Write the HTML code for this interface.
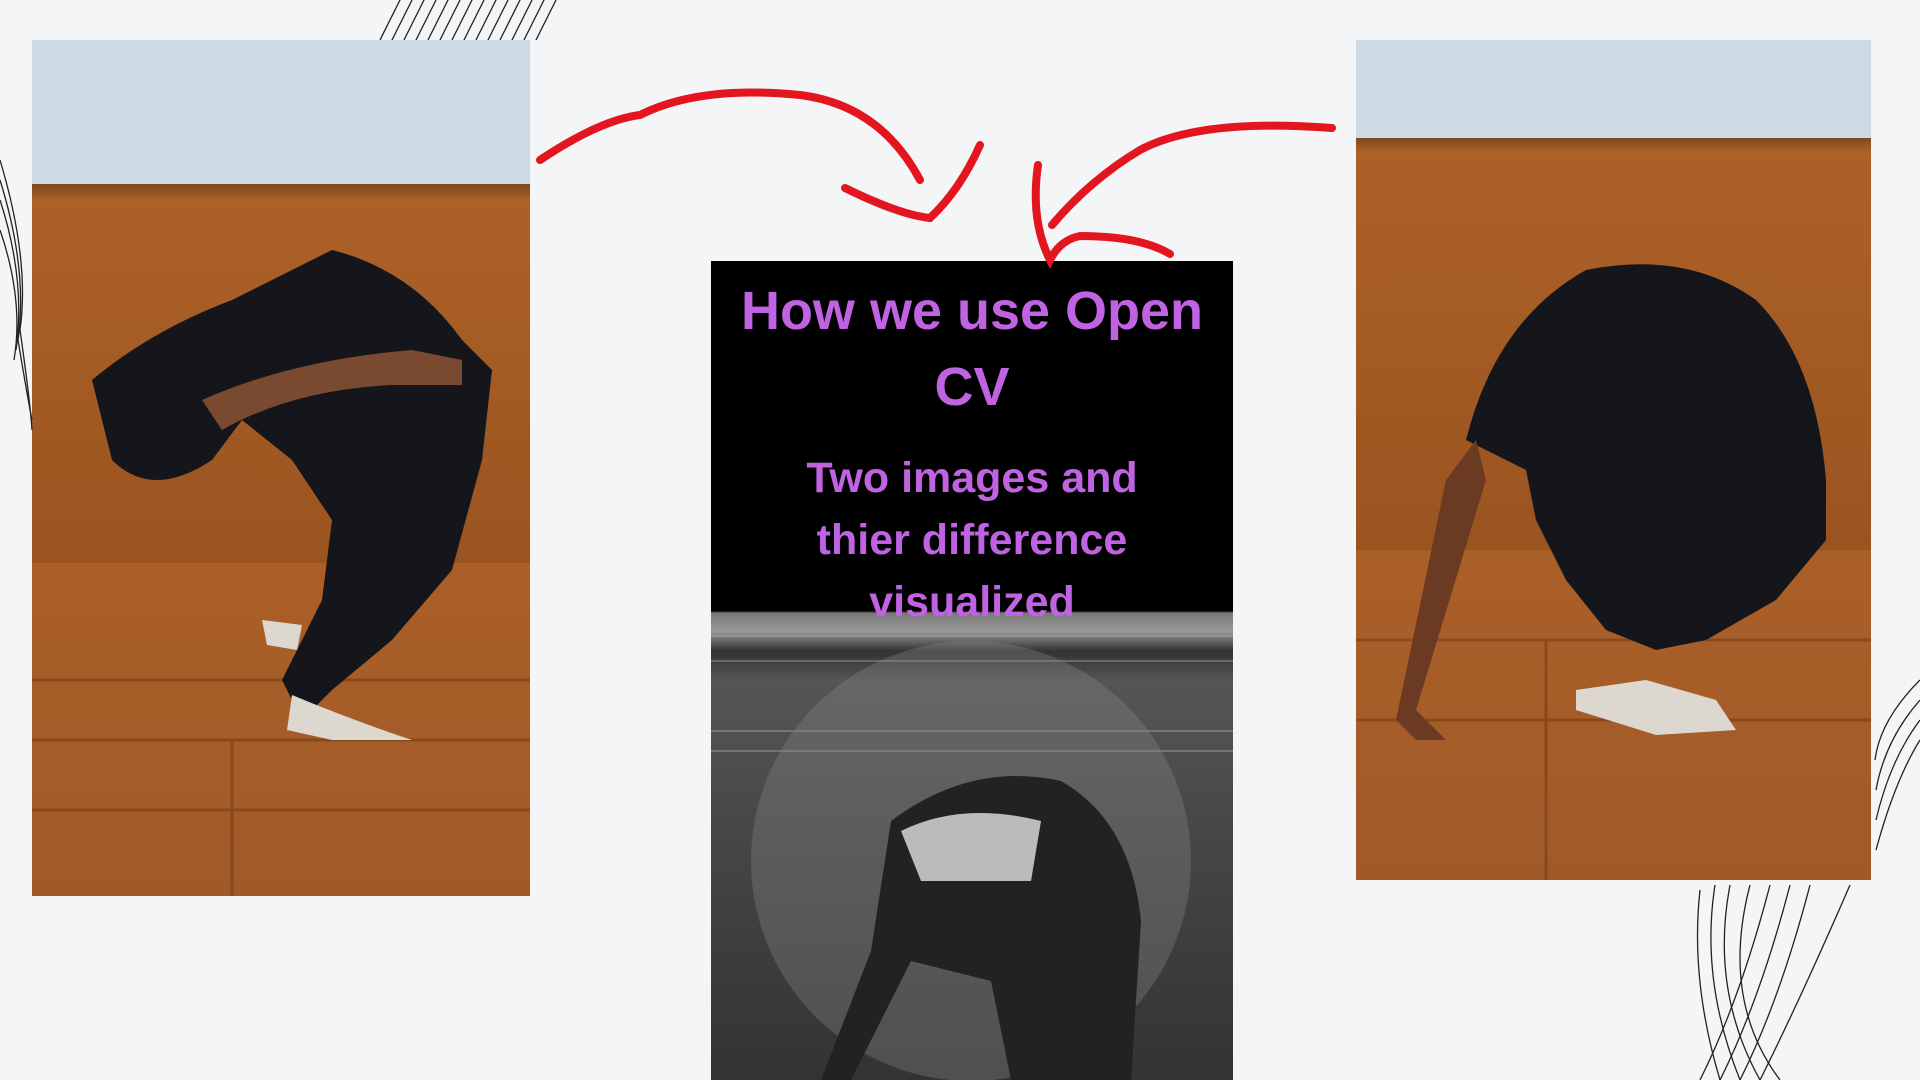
<!DOCTYPE html>
<html><head><meta charset="utf-8"><style>
html,body{margin:0;padding:0;width:1920px;height:1080px;overflow:hidden;background:#f4f5f6;font-family:"Liberation Sans",sans-serif}
.p{position:absolute;overflow:hidden}
.t{position:absolute;left:0;width:522px;text-align:center;color:#c063e2;font-weight:bold}
</style></head><body>
<div class="p" style="left:32px;top:40px;width:498px;height:856px;background:linear-gradient(#cdd9e3 0,#cdd9e3 144px,#7a4a23 144px,#8d4f20 150px,#ad6128 160px,#9a5420 523px,#ab5f28 523px,#a05a28 856px)">
<svg width="498" height="856" style="position:absolute;left:0;top:0">
<g stroke="#6a3a14" stroke-width="3" opacity=".5">
<line x1="0" y1="640" x2="498" y2="640"/><line x1="0" y1="700" x2="498" y2="700"/><line x1="0" y1="770" x2="498" y2="770"/><line x1="200" y1="700" x2="200" y2="856"/></g>
<path d="M60 340 Q120 290 200 260 L300 210 Q380 230 430 300 L460 330 L450 420 L420 530 L360 600 L300 650 L270 680 L250 640 L290 560 L300 480 L260 420 L210 380 L180 420 Q120 460 80 420 Z" fill="#14161c"/>
<path d="M170 360 Q260 320 380 310 L430 320 L430 345 L360 345 Q260 350 190 390 Z" fill="#7a4a30"/>
<path d="M260 655 Q320 680 380 700 L370 700 L300 700 L255 690 Z" fill="#dcd8cf"/>
<path d="M230 580 L270 585 L265 610 L235 605 Z" fill="#dcd8cf"/>
</svg></div>
<div class="p" style="left:1356px;top:40px;width:515px;height:840px;background:linear-gradient(#cdd9e3 0,#cdd9e3 98px,#7a4a23 98px,#ad6128 112px,#9a5420 510px,#ab5f28 510px,#a05a28 840px)">
<svg width="515" height="840" style="position:absolute;left:0;top:0">
<g stroke="#6a3a14" stroke-width="3" opacity=".5"><line x1="0" y1="600" x2="515" y2="600"/><line x1="0" y1="680" x2="515" y2="680"/><line x1="190" y1="600" x2="190" y2="840"/></g>
<path d="M110 400 Q140 280 230 230 Q330 210 400 260 Q460 320 470 440 L470 500 L420 560 L350 600 L300 610 L250 590 L210 540 L180 480 L170 430 Z" fill="#14161c"/>
<path d="M90 440 L120 400 L130 440 L60 670 L90 700 L60 700 L40 680 Z" fill="#6a3a22"/>
<path d="M220 650 L290 640 L360 660 L380 690 L300 695 L220 670 Z" fill="#dcd8cf"/>
</svg></div>
<div class="p" style="left:711px;top:261px;width:522px;height:819px;background:linear-gradient(#000 0,#000 350px,#777 352px,#999 370px,#333 390px,#555 420px,#444 600px,#333 819px)">
<svg width="522" height="819" style="position:absolute;left:0;top:0">
<g stroke="#aaa" stroke-width="2" opacity=".4"><line x1="0" y1="375" x2="522" y2="375"/><line x1="0" y1="400" x2="522" y2="400"/><line x1="0" y1="470" x2="522" y2="470"/><line x1="0" y1="490" x2="522" y2="490"/></g>
<circle cx="260" cy="600" r="220" fill="#888" opacity=".35"/>
<path d="M180 560 Q260 500 350 520 Q420 560 430 660 L420 819 L300 819 L280 720 L200 700 L140 819 L110 819 L160 690 Z" fill="#222"/>
<path d="M190 570 Q250 540 330 560 L320 620 L210 620 Z" fill="#bbb"/>
</svg>
<div class="t" style="top:12px;font-size:54px;line-height:76px">How we use Open<br>CV</div>
<div class="t" style="top:186px;font-size:43px;line-height:62px">Two images and<br>thier difference<br>visualized</div>
</div>
<svg width="1920" height="1080" style="position:absolute;left:0;top:0" fill="none" stroke="#e3151f" stroke-width="8" stroke-linecap="round">
<path d="M540 160 Q600 120 640 115 Q700 85 800 95 Q880 105 920 180"/>
<path d="M845 188 Q900 215 930 218 Q960 190 980 145"/>
<path d="M1332 128 Q1200 118 1140 150 Q1090 180 1052 225"/>
<path d="M1038 165 Q1030 220 1050 260 Q1060 240 1080 236 Q1140 236 1170 254"/>
</svg>
<svg width="1920" height="1080" style="position:absolute;left:0;top:0" fill="none" stroke="#222" stroke-width="1.3">
<g><path d="M380 40 L400 0"/><path d="M392 40 L412 0"/><path d="M404 40 L424 0"/><path d="M416 40 L436 0"/><path d="M428 40 L448 0"/><path d="M440 40 L460 0"/><path d="M452 40 L472 0"/><path d="M464 40 L484 0"/><path d="M476 40 L496 0"/><path d="M488 40 L508 0"/><path d="M500 40 L520 0"/><path d="M512 40 L532 0"/><path d="M524 40 L544 0"/><path d="M536 40 L556 0"/></g>
<g><path d="M0 160 Q30 260 20 330 Q30 400 32 430"/><path d="M0 180 Q28 270 18 340 Q28 400 32 420"/><path d="M0 200 Q26 280 16 350"/><path d="M0 230 Q24 300 14 360"/></g>
<g><path d="M1700 890 Q1690 980 1720 1080"/><path d="M1715 885 Q1700 980 1740 1080"/><path d="M1730 885 Q1710 990 1760 1080"/><path d="M1750 885 Q1720 1000 1780 1080"/><path d="M1770 885 Q1740 1000 1700 1080"/><path d="M1790 885 Q1760 1000 1720 1080"/><path d="M1810 885 Q1780 1000 1740 1080"/><path d="M1850 885 Q1800 1000 1760 1080"/></g>
<g><path d="M1920 680 Q1880 720 1875 760"/><path d="M1920 700 Q1885 740 1876 790"/><path d="M1920 720 Q1890 760 1876 820"/><path d="M1920 740 Q1895 780 1876 850"/></g>
</svg>
</body></html>
